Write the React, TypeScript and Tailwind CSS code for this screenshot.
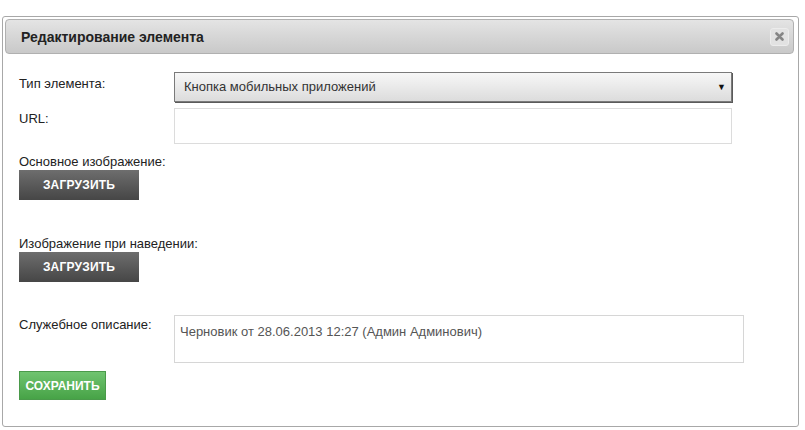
import React from "react";

export default function App() {
  const font = { fontFamily: '"Liberation Sans", Arial, sans-serif' };
  return (
    <div className="w-[805px] h-[430px] bg-white" style={font}>
      <div className="ml-[2px] mt-[16px] w-[797px] h-[411px] border border-[#a8a8a8] rounded-[3px] p-[2px] flex flex-col">
        <div className="h-[35px] ml-[0px] mr-[2px] rounded-[4px] border border-[#b0b0b0] bg-gradient-to-b from-[#e4e4e4] to-[#c9c9c9] flex items-center justify-between pl-[15px] pr-[4px]">
          <div className="text-[14px] font-bold text-[#222] leading-[16px]">Редактирование элемента</div>
          <div className="w-[19px] h-[18px] rounded-[3px] bg-[#e2e2e2] border border-[#ececec] flex items-center justify-center">
            <svg width="9" height="9" viewBox="0 0 9 9">
              <path d="M1.5 1.5 L7.5 7.5 M7.5 1.5 L1.5 7.5" stroke="#858585" strokeWidth="2.6" strokeLinecap="round" />
            </svg>
          </div>
        </div>
        <div className="pl-[14px] flex flex-col text-[13px] leading-[16px] text-[#222]">
          {/* row 1 */}
          <div className="flex mt-[18px]">
            <div className="w-[155px] pt-[4px]">Тип элемента:</div>
            <div className="w-[558px] h-[30px] border border-[#7a7a7a] shadow-[1px_1px_0_#5a5a5a] bg-gradient-to-b from-[#f7f7f7] to-[#dcdcdc] flex items-center justify-between pl-[9px] pr-[5px] text-[#333]">
              <span>Кнопка мобильных приложений</span>
              <span className="text-[9px] text-[#111]">▼</span>
            </div>
          </div>
          {/* row 2 */}
          <div className="flex mt-[6px]">
            <div className="w-[155px] pt-[3px]">URL:</div>
            <div className="w-[558px] h-[36px] border border-[#dcdcdc] bg-white"></div>
          </div>
          {/* row 3 */}
          <div className="mt-[10px]">Основное изображение:</div>
          <div className="w-[120px] h-[30px] bg-gradient-to-b from-[#6e6e6e] to-[#464646] text-white font-bold text-[12px] flex items-center justify-center tracking-[0.2px]">ЗАГРУЗИТЬ</div>
          {/* row 4 */}
          <div className="mt-[36px]">Изображение при наведении:</div>
          <div className="w-[120px] h-[30px] bg-gradient-to-b from-[#6e6e6e] to-[#464646] text-white font-bold text-[12px] flex items-center justify-center tracking-[0.2px]">ЗАГРУЗИТЬ</div>
          {/* row 5 */}
          <div className="flex mt-[33px]">
            <div className="w-[155px] pt-[2px]">Служебное описание:</div>
            <div className="w-[570px] h-[48px] border border-[#d6d6d6] bg-white pl-[5px] pt-[8px] text-[#555]">
              Черновик от 28.06.2013 12:27 (Админ Админович)
            </div>
          </div>
          {/* row 6 */}
          <div className="mt-[8px] w-[87px] h-[29px] border border-[#4a9a4a] bg-gradient-to-b from-[#6fc46f] to-[#47a347] text-white font-bold text-[12px] flex items-center justify-center">СОХРАНИТЬ</div>
        </div>
      </div>
    </div>
  );
}
